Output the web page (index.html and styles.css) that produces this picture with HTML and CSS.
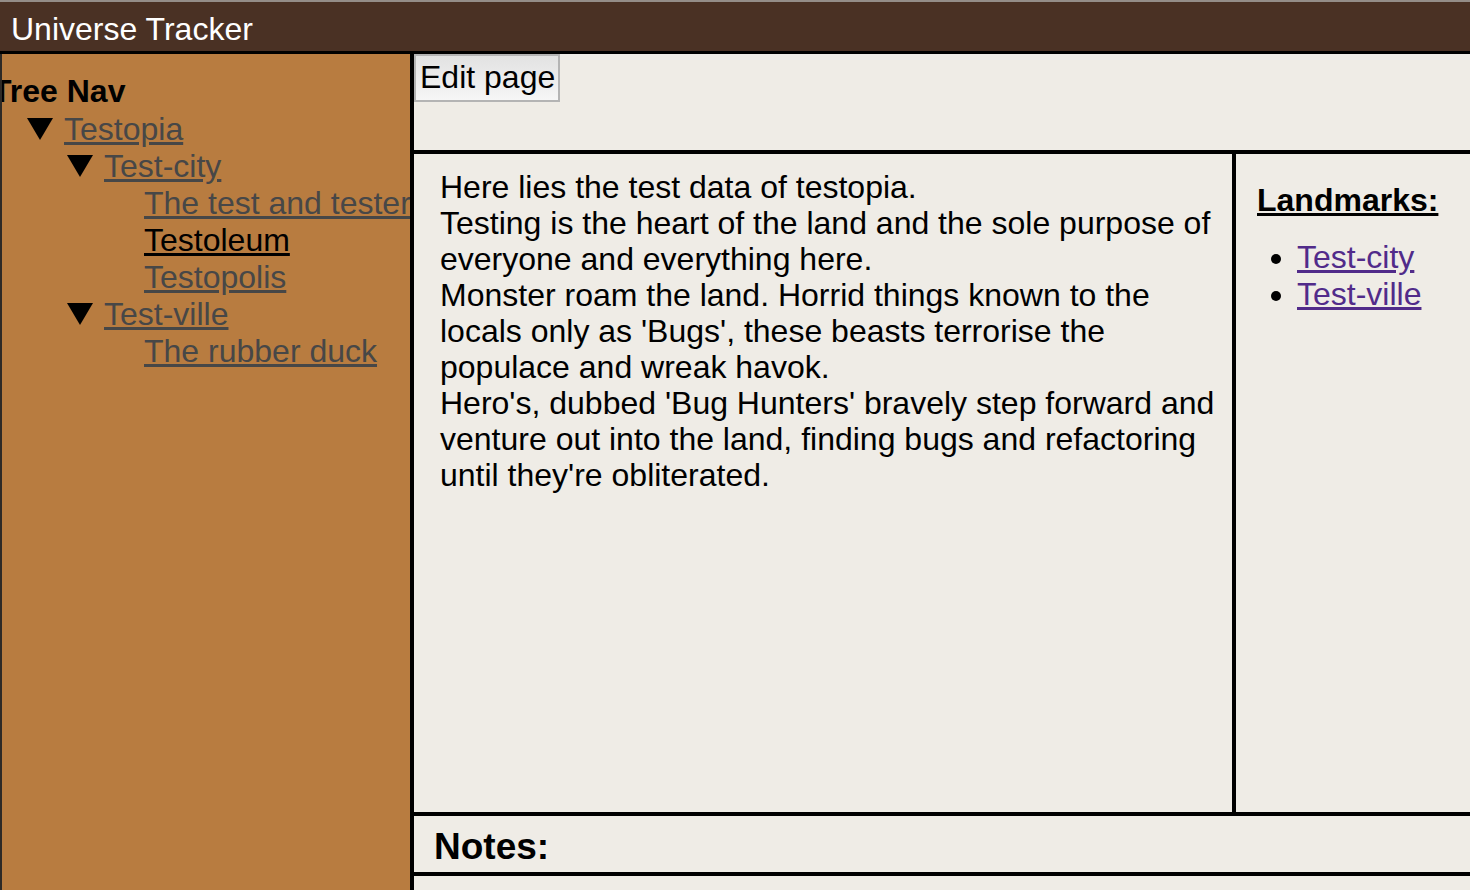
FILE: index.html
```html
<!DOCTYPE html>
<html lang="en">
<head>
<meta charset="utf-8">
<title>Universe Tracker</title>
<link rel="stylesheet" href="styles.css">
</head>
<body>
<header class="topbar">Universe Tracker</header>
<div class="layout">
  <nav class="sidebar">
    <h2 class="nav-title">Tree Nav</h2>
    <ul class="tree level1">
      <li>
        <div class="row"><span class="tri"></span><a href="#">Testopia</a></div>
        <ul class="tree level2">
          <li>
            <div class="row"><span class="tri"></span><a href="#">Test-city</a></div>
            <ul class="tree leaves">
              <li><a href="#">The test and tester</a></li>
              <li><a href="#" class="current">Testoleum</a></li>
              <li><a href="#">Testopolis</a></li>
            </ul>
          </li>
          <li>
            <div class="row"><span class="tri"></span><a href="#">Test-ville</a></div>
            <ul class="tree leaves">
              <li><a href="#">The rubber duck</a></li>
            </ul>
          </li>
        </ul>
      </li>
    </ul>
  </nav>
  <main class="main">
    <div class="editbar"><button class="edit-btn" type="button">Edit page</button></div>
    <div class="content-row">
      <article class="article">
        <p>Here lies the test data of testopia.<br>
        Testing is the heart of the land and the sole purpose of everyone and everything here.<br>
        Monster roam the land. Horrid things known to the locals only as 'Bugs', these beasts terrorise the populace and wreak havok.<br>
        Hero's, dubbed 'Bug Hunters' bravely step forward and venture out into the land, finding bugs and refactoring until they're obliterated.</p>
      </article>
      <aside class="landmarks">
        <h3 class="landmarks-title">Landmarks:</h3>
        <ul class="landmark-list">
          <li><a href="#">Test-city</a></li>
          <li><a href="#">Test-ville</a></li>
        </ul>
      </aside>
    </div>
    <section class="notes">
      <h2 class="notes-title">Notes:</h2>
    </section>
  </main>
</div>
</body>
</html>
```

FILE: styles.css
```css
html, body {
  margin: 0;
  padding: 0;
}

body {
  font-family: "Liberation Sans", Arial, Helvetica, sans-serif;
  font-size: 32px;
  background: #efece6;
  color: #000;
}

.topbar {
  border-top: 2px solid #948d88;
  background: #4a3124;
  color: #fff;
  padding: 9px 11px 3px;
  line-height: 37px;
  border-bottom: 3px solid #000;
}

.layout {
  display: flex;
  min-height: calc(100vh - 54px);
}

.sidebar {
  flex: 0 0 auto;
  width: 408px;
  background: #b87c40;
  border-left: 2px solid #2e2a26;
  border-right: 4px solid #000;
  overflow: hidden;
  white-space: nowrap;
  padding-top: 19px;
}

.nav-title {
  font-size: 32px;
  font-weight: bold;
  margin: 0 0 0 -10px;
  line-height: normal;
}

.tree {
  list-style: none;
  margin: 0;
  padding: 0;
}

.level1 {
  margin-top: 1px;
  padding-left: 25px;
}

.level2 {
  padding-left: 40px;
}

.leaves {
  padding-left: 77px;
}

.tri {
  display: inline-block;
  width: 0;
  height: 0;
  border-left: 13px solid transparent;
  border-right: 13px solid transparent;
  border-top: 22px solid #000;
  margin-right: 11px;
}

.tree a {
  color: #474747;
}

.tree a.current {
  color: #000;
}

.main {
  flex: 1 1 auto;
  display: flex;
  flex-direction: column;
}

.editbar {
  height: 96px;
  border-bottom: 4px solid #000;
}

.edit-btn {
  display: block;
  margin: 0;
  font-family: inherit;
  font-size: 32px;
  line-height: normal;
  color: #000;
  padding: 3px 3px 4px 4px;
  border: 2px solid #b4b4b4;
  border-radius: 0;
  background: linear-gradient(#e2e2e2, #f6f6f6);
}

.content-row {
  display: flex;
  height: 662px;
  box-sizing: border-box;
  border-bottom: 4px solid #000;
}

.article {
  box-sizing: border-box;
  width: 822px;
  flex: 0 0 auto;
  border-right: 4px solid #000;
  padding: 15px 8px 0 26px;
  line-height: 36px;
}

.article p {
  margin: 0;
}

.landmarks {
  flex: 1 1 auto;
  padding: 28px 0 0 21px;
}

.landmarks-title {
  font-size: 32px;
  font-weight: bold;
  text-decoration: underline;
  line-height: normal;
  margin: 0 0 20px;
}

.landmark-list {
  margin: 0;
  padding-left: 40px;
  line-height: normal;
}

.landmark-list a {
  color: #512b8a;
}

.notes {
  height: 60px;
  box-sizing: border-box;
  padding: 10px 0 0 20px;
  border-bottom: 4px solid #000;
}

.notes-title {
  font-size: 37px;
  font-weight: bold;
  margin: 0;
  line-height: normal;
}
```
